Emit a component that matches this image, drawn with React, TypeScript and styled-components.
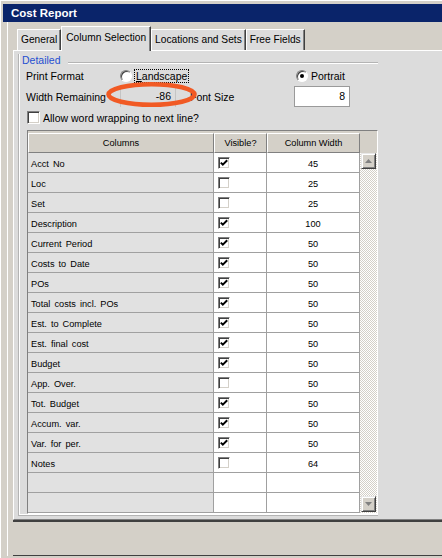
import * as React from 'react';
import styled, { createGlobalStyle } from 'styled-components';

const GlobalStyle = createGlobalStyle`
  html, body {
    margin: 0;
    padding: 0;
    background: #d4d0c8;
  }
  body {
    font-family: 'Liberation Sans', Arial, sans-serif;
    color: #000;
  }
`;

const Window = styled.div`
  width: 442px;
  height: 558px;
  box-sizing: border-box;
  padding: 3px 0 0 2px;
  border-top: 1px solid #fff;
  border-left: 1px solid #fff;
  background: #d4d0c8;
  display: flex;
  flex-direction: column;
  overflow: hidden;
`;

const TitleBar = styled.div`
  height: 18px;
  line-height: 18px;
  padding-left: 8px;
  background: #0a246a;
  color: #fff;
  font-weight: bold;
  font-size: 11.5px;
`;

const Body = styled.div`
  display: flex;
  flex-direction: column;
  margin-left: 4px;
  padding-left: 5px;
  border-left: 1px solid #fff;
`;

const TabStrip = styled.div`
  height: 28px;
  padding-left: 4px;
  display: flex;
  align-items: flex-end;
  font-size: 10.2px;
`;

const Tab = styled.div<{ $active?: boolean }>`
  position: relative;
  box-sizing: border-box;
  height: ${({ $active }) => ($active ? '25px' : '21px')};
  line-height: ${({ $active }) => ($active ? '21px' : '19px')};
  padding: 0 ${({ $active }) => ($active ? '4px' : '3px')};
  margin-bottom: ${({ $active }) => ($active ? '-1px' : '0')};
  background: #dcdcdc;
  border-top: 1px solid #fff;
  border-left: 1px solid #fff;
  border-right: 1px solid #404040;
  box-shadow: inset -1px 0 #808080;
  white-space: nowrap;
  z-index: ${({ $active }) => ($active ? 2 : 1)};
`;

const Panel = styled.div`
  box-sizing: border-box;
  height: 470px;
  padding: 3px 0 0 4px;
  background: #dcdcdc;
  border-top: 1px solid #fff;
  border-left: 1px solid #fff;
  border-bottom: 1px solid #808080;
  font-size: 10.5px;
`;

const GroupBox = styled.div`
  width: 360px;
  box-sizing: border-box;
  height: 462px;
  border-left: 1px solid #b4b4b4;
  border-bottom: 1px solid #b4b4b4;
  box-shadow: inset 1px -1px #fff;
`;

const Legend = styled.div`
  display: flex;
  align-items: center;
  height: 12px;
  padding-left: 3px;
  color: #1f4fd1;
  &::after {
    content: '';
    flex: 1;
    margin: 4px 0 0 7px;
    height: 1px;
    background: #b4b4b4;
    box-shadow: 0 1px #fff;
  }
`;

const GroupBody = styled.div`
  padding-left: 7px;
`;

const FormRow = styled.div<{ $height: number; $top: number }>`
  display: grid;
  grid-template-columns: 94px 176px auto;
  align-items: center;
  height: ${({ $height }) => $height}px;
  margin-top: ${({ $top }) => $top}px;
  white-space: nowrap;
`;

const SizeRow = styled(FormRow)`
  grid-template-columns: 94px 56px 118px 56px;
`;

const Label = styled.span<{ $indent?: number }>`
  padding-left: ${({ $indent }) => $indent ?? 0}px;
`;

const RadioOption = styled.label`
  display: flex;
  align-items: center;
  gap: 3px;
`;

const RadioCircle = styled.span<{ $checked?: boolean }>`
  position: relative;
  box-sizing: border-box;
  width: 12px;
  height: 12px;
  border-radius: 50%;
  background: #fff;
  border: 1px solid;
  border-color: #808080 #fff #fff #808080;
  box-shadow: inset 1px 1px #404040;
  &::after {
    content: '';
    display: ${({ $checked }) => ($checked ? 'block' : 'none')};
    position: absolute;
    left: 3px;
    top: 3px;
    width: 4px;
    height: 4px;
    border-radius: 50%;
    background: #000;
  }
`;

const FocusText = styled.span`
  padding: 0 1px;
  line-height: 12px;
  outline: 1px dotted #000;
  u {
    text-decoration: underline;
  }
`;

const ReadOnlyField = styled.div`
  position: relative;
  height: 21px;
  line-height: 21px;
  box-sizing: border-box;
  border-left: 1px solid #c4c4c4;
  border-right: 1px solid #c4c4c4;
  text-align: right;
  padding-right: 4px;
`;

const Callout = styled.svg`
  position: absolute;
  left: -15px;
  top: -4px;
  width: 91px;
  height: 25px;
  pointer-events: none;
  overflow: visible;
`;

const TextBox = styled.div`
  height: 21px;
  line-height: 19px;
  box-sizing: border-box;
  background: #fff;
  border: 1px solid #9a9a9a;
  text-align: right;
  padding-right: 4px;
`;

const CheckRow = styled.label`
  display: flex;
  align-items: center;
  gap: 3px;
  height: 13px;
  margin: 4px 0 0 1px;
`;

const Box = styled.span<{ $size: number }>`
  display: inline-flex;
  align-items: center;
  justify-content: center;
  box-sizing: border-box;
  width: ${({ $size }) => $size}px;
  height: ${({ $size }) => $size}px;
  background: #fff;
  border: 1px solid;
  border-color: #808080 #fff #fff #808080;
  box-shadow: inset 1px 1px #404040, inset -1px -1px #d4d0c8;
`;

const Grid = styled.div`
  margin: 6px 0 0 1px;
  width: 351px;
  box-sizing: border-box;
  border: 1px solid;
  border-color: #808080 #fff #fff #808080;
  display: flex;
  font-size: 9.2px;
`;

const Columns = styled.div`
  display: grid;
  grid-template-columns: 186px 53px 93px;
  grid-auto-rows: 20px;
  grid-template-rows: 22px;
  background: #d4d0c8;
`;

const HeadCell = styled.div`
  align-self: end;
  height: 20px;
  box-sizing: border-box;
  background: #d4d0c8;
  border: 1px solid;
  border-color: #fff #808080 #808080 #fff;
  line-height: 18px;
  text-align: center;
`;

const Cell = styled.div<{ $kind: 'name' | 'check' | 'num' }>`
  box-sizing: border-box;
  height: 20px;
  border-right: 1px solid #a0a0a0;
  border-bottom: 1px solid #a0a0a0;
  background: ${({ $kind }) => ($kind === 'name' ? '#e1e1e1' : '#fff')};
  display: flex;
  align-items: center;
  justify-content: ${({ $kind }) => ($kind === 'num' ? 'center' : 'flex-start')};
  padding-left: ${({ $kind }) => ($kind === 'name' ? '3px' : $kind === 'check' ? '4px' : '0')};
  padding-top: ${({ $kind }) => ($kind === 'check' ? '0' : '2px')};
  word-spacing: 1.5px;
  white-space: nowrap;
`;

const ScrollColumn = styled.div`
  width: 17px;
  display: flex;
  flex-direction: column;
  background: #d4d0c8;
`;

const ScrollTrack = styled.div`
  margin-top: 22px;
  height: 360px;
  display: flex;
  flex-direction: column;
  justify-content: space-between;
  align-items: flex-start;
  padding-left: 1px;
  box-sizing: border-box;
  background-color: #fff;
  background-image: repeating-conic-gradient(#d4d0c8 0 25%, #fff 0 50%);
  background-size: 2px 2px;
`;

const ScrollButton = styled.div`
  width: 15px;
  height: 16px;
  box-sizing: border-box;
  margin-bottom: 1px;
  background: #d4d0c8;
  border: 1px solid;
  border-color: #e8e8e8 #404040 #404040 #e8e8e8;
  box-shadow: inset 1px 1px #fff, inset -1px -1px #808080;
  display: flex;
  align-items: center;
  justify-content: center;
`;

const Footer = styled.div`
  height: 33px;
  border-top: 2px solid #404040;
  border-bottom: 1px solid #404040;
  background: #d4d0c8;
`;

type Row = { name: string; visible?: boolean; width?: number };

const rows: Row[] = [
  { name: 'Acct No', visible: true, width: 45 },
  { name: 'Loc', visible: false, width: 25 },
  { name: 'Set', visible: false, width: 25 },
  { name: 'Description', visible: true, width: 100 },
  { name: 'Current Period', visible: true, width: 50 },
  { name: 'Costs to Date', visible: true, width: 50 },
  { name: 'POs', visible: true, width: 50 },
  { name: 'Total costs incl. POs', visible: true, width: 50 },
  { name: 'Est. to Complete', visible: true, width: 50 },
  { name: 'Est. final cost', visible: true, width: 50 },
  { name: 'Budget', visible: true, width: 50 },
  { name: 'App. Over.', visible: false, width: 50 },
  { name: 'Tot. Budget', visible: true, width: 50 },
  { name: 'Accum. var.', visible: true, width: 50 },
  { name: 'Var. for per.', visible: true, width: 50 },
  { name: 'Notes', visible: false, width: 64 },
  { name: '' },
  { name: '' },
];

const CheckMark = () => (
  <svg width="8" height="8" viewBox="0 0 8 8">
    <polyline points="0.8,3.6 2.8,5.6 7.2,1.2" fill="none" stroke="#000" strokeWidth="2" />
  </svg>
);

const CheckBox: React.FC<{ checked?: boolean; size?: number }> = ({ checked, size = 12 }) => (
  <Box $size={size}>{checked && <CheckMark />}</Box>
);

const Arrow: React.FC<{ down?: boolean }> = ({ down }) => (
  <svg width="7" height="4" viewBox="0 0 7 4">
    <polygon points={down ? '0,0 7,0 3.5,4' : '0,4 7,4 3.5,0'} fill="#808080" />
  </svg>
);

const App: React.FC = () => (
  <>
    <GlobalStyle />
    <Window>
      <TitleBar>Cost Report</TitleBar>
      <Body>
        <TabStrip>
          <Tab>General</Tab>
          <Tab $active>Column Selection</Tab>
          <Tab>Locations and Sets</Tab>
          <Tab>Free Fields</Tab>
        </TabStrip>
        <Panel>
          <GroupBox>
            <Legend>Detailed</Legend>
            <GroupBody>
              <FormRow $height={14} $top={3}>
                <Label>Print Format</Label>
                <RadioOption>
                  <RadioCircle />
                  <FocusText>
                    <u>L</u>andscape
                  </FocusText>
                </RadioOption>
                <RadioOption>
                  <RadioCircle $checked />
                  <span>Portrait</span>
                </RadioOption>
              </FormRow>
              <SizeRow $height={21} $top={3}>
                <Label>Width Remaining</Label>
                <ReadOnlyField>
                  -86
                  <Callout viewBox="0 0 91 25">
                    <ellipse cx="45.5" cy="12.5" rx="43" ry="10.3" fill="none" stroke="#f15a24" strokeWidth="4.6" />
                  </Callout>
                </ReadOnlyField>
                <Label $indent={14}>Font Size</Label>
                <TextBox>8</TextBox>
              </SizeRow>
              <CheckRow>
                <CheckBox size={13} />
                <span>Allow word wrapping to next line?</span>
              </CheckRow>
              <Grid>
                <Columns>
                  <HeadCell>Columns</HeadCell>
                  <HeadCell>Visible?</HeadCell>
                  <HeadCell>Column Width</HeadCell>
                  {rows.map((row, index) => (
                    <React.Fragment key={index}>
                      <Cell $kind="name">{row.name}</Cell>
                      <Cell $kind="check">
                        {row.name && <CheckBox checked={row.visible} />}
                      </Cell>
                      <Cell $kind="num">{row.width}</Cell>
                    </React.Fragment>
                  ))}
                </Columns>
                <ScrollColumn>
                  <ScrollTrack>
                    <ScrollButton>
                      <Arrow />
                    </ScrollButton>
                    <ScrollButton>
                      <Arrow down />
                    </ScrollButton>
                  </ScrollTrack>
                </ScrollColumn>
              </Grid>
            </GroupBody>
          </GroupBox>
        </Panel>
        <Footer />
      </Body>
    </Window>
  </>
);

export default App;
